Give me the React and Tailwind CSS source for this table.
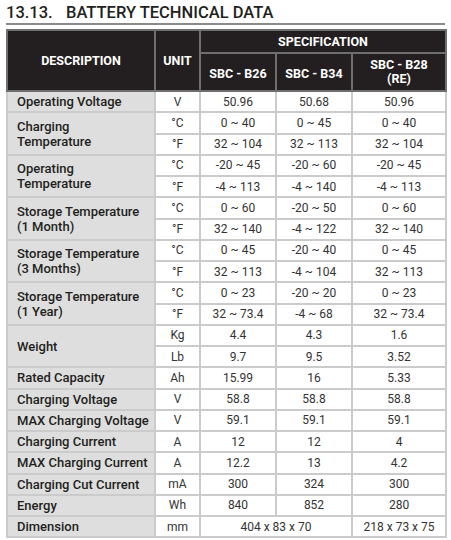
import React from 'react';

const rows = [
  { desc: ['Operating Voltage'], units: [['V', '50.96', '50.68', '50.96']] },
  {
    desc: ['Charging', 'Temperature'],
    units: [
      ['°C', '0 ~ 40', '0 ~ 45', '0 ~ 40'],
      ['°F', '32 ~ 104', '32 ~ 113', '32 ~ 104'],
    ],
  },
  {
    desc: ['Operating', 'Temperature'],
    units: [
      ['°C', '-20 ~ 45', '-20 ~ 60', '-20 ~ 45'],
      ['°F', '-4 ~ 113', '-4 ~ 140', '-4 ~ 113'],
    ],
  },
  {
    desc: ['Storage Temperature', '(1 Month)'],
    units: [
      ['°C', '0 ~ 60', '-20 ~ 50', '0 ~ 60'],
      ['°F', '32 ~ 140', '-4 ~ 122', '32 ~ 140'],
    ],
  },
  {
    desc: ['Storage Temperature', '(3 Months)'],
    units: [
      ['°C', '0 ~ 45', '-20 ~ 40', '0 ~ 45'],
      ['°F', '32 ~ 113', '-4 ~ 104', '32 ~ 113'],
    ],
  },
  {
    desc: ['Storage Temperature', '(1 Year)'],
    units: [
      ['°C', '0 ~ 23', '-20 ~ 20', '0 ~ 23'],
      ['°F', '32 ~ 73.4', '-4 ~ 68', '32 ~ 73.4'],
    ],
  },
  {
    desc: ['Weight'],
    units: [
      ['Kg', '4.4', '4.3', '1.6'],
      ['Lb', '9.7', '9.5', '3.52'],
    ],
  },
  { desc: ['Rated Capacity'], units: [['Ah', '15.99', '16', '5.33']] },
  { desc: ['Charging Voltage'], units: [['V', '58.8', '58.8', '58.8']] },
  { desc: ['MAX Charging Voltage'], units: [['V', '59.1', '59.1', '59.1']] },
  { desc: ['Charging Current'], units: [['A', '12', '12', '4']] },
  { desc: ['MAX Charging Current'], units: [['A', '12.2', '13', '4.2']] },
  { desc: ['Charging Cut Current'], units: [['mA', '300', '324', '300']] },
  { desc: ['Energy'], units: [['Wh', '840', '852', '280']] },
];

const head = 'border-2 border-[#6f6f6f] bg-[#231f20] text-white font-bold text-[12.5px] leading-[14px] text-center';
const cell = 'border-2 border-[#cbcbcb] text-center text-[12px] text-[#333] h-[21.25px] p-0';
const descCell =
  'border-2 border-[#cbcbcb] bg-[#dedede] text-left pl-[9px] text-[13px] leading-[15px] font-medium text-[#231f20] p-0';

export default function App() {
  return (
    <div className="w-[451px] h-[540px] bg-white px-[6px] pt-[3px] font-['Roboto',sans-serif]">
      <div className="border-b-2 border-[#8a8a8a] pb-[1px] flex text-[16.5px] leading-[19px] font-medium text-[#231f20]">
        <span className="w-[60px]">13.13.</span>
        <span>BATTERY TECHNICAL DATA</span>
      </div>
      <table className="mt-[4px] w-[439px] table-fixed border-collapse">
        <colgroup>
          <col className="w-[148px]" />
          <col className="w-[45px]" />
          <col className="w-[76px]" />
          <col className="w-[76px]" />
          <col className="w-[94px]" />
        </colgroup>
        <thead>
          <tr className="h-[23px]">
            <th rowSpan={2} className={head}>DESCRIPTION</th>
            <th rowSpan={2} className={head}>UNIT</th>
            <th colSpan={3} className={head}>SPECIFICATION</th>
          </tr>
          <tr className="h-[38px]">
            <th className={head + ' pt-[4px]'}>SBC - B26</th>
            <th className={head + ' pt-[4px]'}>SBC - B34</th>
            <th className={head}>
              SBC - B28
              <br />
              (RE)
            </th>
          </tr>
        </thead>
        <tbody>
          {rows.map((r) =>
            r.units.map((u, i) => (
              <tr key={r.desc.join() + u[0]}>
                {i === 0 && (
                  <td rowSpan={r.units.length} className={descCell}>
                    {r.desc.map((d) => (
                      <div key={d}>{d}</div>
                    ))}
                  </td>
                )}
                {u.map((v, j) => (
                  <td key={j} className={cell}>
                    {v}
                  </td>
                ))}
              </tr>
            ))
          )}
          <tr>
            <td className={descCell}>Dimension</td>
            <td className={cell}>mm</td>
            <td colSpan={2} className={cell}>404 x 83 x 70</td>
            <td className={cell}>218 x 73 x 75</td>
          </tr>
        </tbody>
      </table>
    </div>
  );
}
